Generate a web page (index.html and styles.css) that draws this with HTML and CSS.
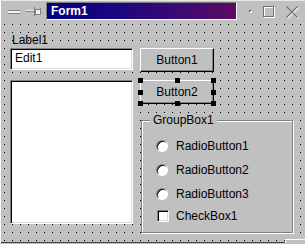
FILE: index.html
```html
<!DOCTYPE html>
<html lang="en">
<head>
    <meta charset="UTF-8">
    <meta name="viewport" content="width=device-width, initial-scale=1.0">
    <title>Form1</title>
    <link rel="stylesheet" href="styles.css">
</head>
<body>
    <div class="window">
        <div class="titlebar">
            <svg class="tb-dash" width="12" height="4" viewBox="0 0 12 4">
                <rect x="0" y="0" width="12" height="1" fill="#808080"/>
                <rect x="0" y="1" width="12" height="2" fill="#f4f4f4"/>
                <rect x="0" y="3" width="12" height="1" fill="#808080"/>
            </svg>
            <svg class="tb-pin" width="15" height="9" viewBox="0 0 15 9">
                <rect x="0" y="4" width="8" height="1" fill="#808080"/>
                <rect x="0" y="3" width="8" height="1" fill="#f4f4f4"/>
                <rect x="8" y="0" width="1" height="9" fill="#808080"/>
                <rect x="9" y="2" width="5" height="5" fill="#f4f4f4" stroke="#808080" stroke-width="1" transform="translate(0.5 0.5)"/>
                <rect x="14" y="1" width="1" height="7" fill="#808080"/>
            </svg>
            <div class="caption">Form1</div>
            <svg class="tb-dot" width="3" height="3" viewBox="0 0 3 3">
                <rect x="0" y="0" width="2" height="2" fill="#606060"/>
                <rect x="1" y="1" width="2" height="2" fill="#fff" opacity="0.8"/>
            </svg>
            <svg class="tb-max" width="12" height="12" viewBox="0 0 12 12">
                <rect x="1.5" y="1.5" width="10" height="10" fill="none" stroke="#fff"/>
                <rect x="0.5" y="0.5" width="10" height="10" fill="none" stroke="#707070"/>
            </svg>
            <svg class="tb-close" width="14" height="14" viewBox="0 0 14 14">
                <path d="M1.5 1.5 L12.5 12.5 M12.5 1.5 L1.5 12.5" stroke="#fff" stroke-width="1.2" transform="translate(1 1)"/>
                <path d="M1.5 1.5 L12.5 12.5 M12.5 1.5 L1.5 12.5" stroke="#707070" stroke-width="1.2"/>
            </svg>
        </div>

        <div class="form">
            <div class="col-left">
                <div class="label">Label1</div>
                <div class="edit">Edit1</div>
                <div class="listbox"></div>
            </div>
            <div class="col-right">
                <div class="button">Button1</div>
                <div class="button selected">
                    Button2
                    <span class="handle h-tl"></span>
                    <span class="handle h-tm"></span>
                    <span class="handle h-tr"></span>
                    <span class="handle h-ml"></span>
                    <span class="handle h-mr"></span>
                    <span class="handle h-bl"></span>
                    <span class="handle h-bm"></span>
                    <span class="handle h-br"></span>
                </div>
                <div class="groupbox">
                    <span class="groupbox-title">GroupBox1</span>
                    <div class="option"><span class="radio"></span>RadioButton1</div>
                    <div class="option"><span class="radio"></span>RadioButton2</div>
                    <div class="option"><span class="radio"></span>RadioButton3</div>
                    <div class="option option-check"><span class="checkbox"></span>CheckBox1</div>
                </div>
            </div>
        </div>
        <span class="corner"></span>
    </div>
</body>
</html>
```

FILE: styles.css
```css
* {
    margin: 0;
    padding: 0;
    box-sizing: border-box;
}

body {
    background: #c0c0c0;
    font-family: "Liberation Sans", Arial, sans-serif;
    font-size: 12px;
    color: #000;
}

.window {
    position: relative;
    width: 305px;
    height: 243px;
    /* designer grid: one black dot every 8px */
    background-color: #000;
    background-image:
        linear-gradient(to right, transparent 1px, #c0c0c0 1px),
        linear-gradient(to bottom, transparent 1px, #c0c0c0 1px);
    background-size: 8px 8px;
    background-position: 4px 0;
    box-shadow: inset 1px 1px 0 #fff, inset 0 -1px 0 #404040;
    overflow: hidden;
}

.titlebar {
    display: flex;
    align-items: center;
    height: 22px;
    padding-left: 8px;
    background: #c0c0c0;
    border-top: 1px solid #e8e8e8;
    border-left: 1px solid #fff;
}

.titlebar svg {
    display: block;
    flex: none;
}

.tb-dash {
    margin-left: -1px;
}

.tb-pin {
    margin-left: 6px;
}

.caption {
    width: 191px;
    height: 18px;
    margin-left: 5px;
    margin-top: -1px;
    padding-left: 4px;
    line-height: 16px;
    font-weight: bold;
    color: #fff;
    background: linear-gradient(to right, #000080, #1a0680 35%, #3c0a72 70%, #5a0c62);
    border: 1px solid;
    border-color: #808080 #fff #fff #808080;
}

.tb-dot {
    margin-left: 12px;
}

.tb-max {
    margin-left: 11px;
}

.tb-close {
    margin-left: 10px;
}

.form {
    display: flex;
    gap: 7px;
    padding-left: 10px;
}

.col-left {
    width: 123px;
    padding-top: 10px;
}

.label {
    height: 16px;
    line-height: 16px;
    padding-left: 2px;
}

.edit {
    height: 22px;
    line-height: 18px;
    padding-left: 4px;
    background: #fff;
    border: 1px solid;
    border-color: #808080 #fff #fff #808080;
    box-shadow: inset 1px 1px 0 #000, inset -1px -1px 0 #dcdcdc;
}

.listbox {
    height: 144px;
    margin-top: 10px;
    background: #fff;
    border: 1px solid;
    border-color: #808080 #fff #fff #808080;
    box-shadow: inset 1px 1px 0 #000, inset -1px -1px 0 #dcdcdc;
}

.col-right {
    display: flex;
    flex-direction: column;
    align-items: flex-start;
    padding-top: 26px;
}

.button {
    position: relative;
    width: 74px;
    height: 24px;
    line-height: 22px;
    text-align: center;
    background: #c0c0c0;
    border: 1px solid;
    border-color: #fff #000 #000 #fff;
    box-shadow: inset -1px -1px 0 #808080;
}

.button + .button {
    margin-top: 8px;
}

.handle {
    position: absolute;
    width: 5px;
    height: 5px;
    background: #000;
}

.h-tl, .h-tm, .h-tr { top: -3px; }
.h-ml, .h-mr { top: 9px; }
.h-bl, .h-bm, .h-br { bottom: -3px; }
.h-tl, .h-ml, .h-bl { left: -3px; }
.h-tm, .h-bm { left: 34px; }
.h-tr, .h-mr, .h-br { right: -3px; }

.groupbox {
    position: relative;
    width: 152px;
    height: 113px;
    margin-top: 16px;
    margin-left: 1px;
    padding: 13px 0 0 14px;
    background: #c0c0c0;
    border: 1px solid #808080;
    box-shadow: inset 1px 1px 0 #fff, 1px 1px 0 #fff;
}

.groupbox-title {
    position: absolute;
    top: -8px;
    left: 8px;
    padding: 0 3px;
    line-height: 14px;
    background: #c0c0c0;
}

.option {
    display: flex;
    align-items: center;
    gap: 8px;
    height: 24px;
}

.option-check {
    height: 20px;
}

.radio {
    width: 12px;
    height: 12px;
    border-radius: 50%;
    background: #fff;
    border: 1px solid;
    border-color: #808080 #fff #fff #808080;
    box-shadow: inset 1px 1px 0 #000;
}

.checkbox {
    width: 12px;
    height: 12px;
    margin-left: 1px;
    margin-right: -1px;
    background: #fff;
    border: 1px solid;
    border-color: #808080 #fff #fff #808080;
    box-shadow: inset 1px 1px 0 #000, inset -1px -1px 0 #dcdcdc;
}

.corner {
    position: absolute;
    left: 285px;
    top: 239px;
    width: 20px;
    height: 4px;
    border-top: 1px solid #fff;
    border-left: 1px solid #fff;
    background: #c0c0c0;
}
```
